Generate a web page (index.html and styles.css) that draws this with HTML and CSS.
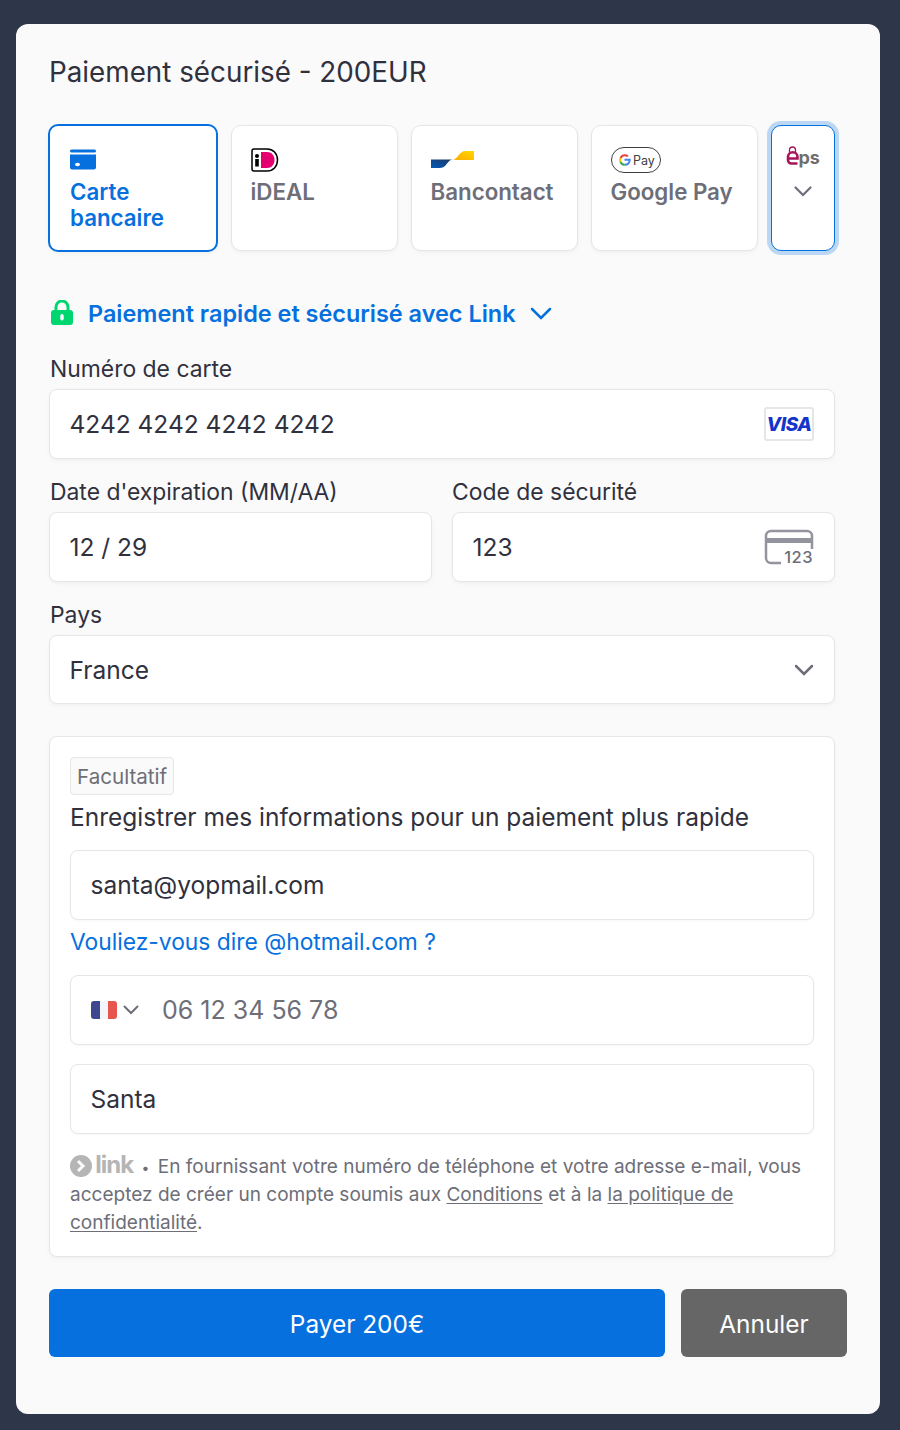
FILE: index.html
```html
<!DOCTYPE html>
<html lang="fr">
<head>
  <meta charset="UTF-8">
  <title>Paiement sécurisé</title>
  <link rel="stylesheet" href="styles.css">
</head>
<body>
  <div class="modal">
    <h1 class="title">Paiement sécurisé - 200EUR</h1>

    <div class="tabs">
      <div class="tab selected">
        <svg class="tab-icon" width="26" height="21" viewBox="0 0 26 21"><rect x="0" y="0" width="26" height="3" rx="1.5" fill="#0570de"/><path d="M0 5h26v13a2 2 0 0 1-2 2H2a2 2 0 0 1-2-2z" fill="#0570de"/><ellipse cx="7.500" cy="15" rx="2.500" ry="1.800" fill="#fff"/></svg>
        <span>Carte bancaire</span>
      </div>
      <div class="tab">
        <svg class="tab-icon" width="28" height="24" viewBox="0 0 28 24"><path d="M3 1h13c6 0 10.500 4.500 10.500 11S22 23 16 23H3a2 2 0 0 1-2-2V3a2 2 0 0 1 2-2z" fill="#fff" stroke="#000" stroke-width="1.500"/><path d="M10 4h6c4.500 0 7.500 3.500 7.500 8s-3 8-7.500 8h-6z" fill="#e5006f"/><circle cx="6" cy="8" r="2" fill="#000"/><rect x="4.200" y="11" width="3.600" height="7.500" fill="#000"/></svg>
        <span>iDEAL</span>
      </div>
      <div class="tab">
        <svg class="tab-icon" width="44" height="24" viewBox="0 0 44 24">
          <defs>
            <linearGradient id="bc-blue" x1="0" y1="1" x2="1" y2="0"><stop offset="0" stop-color="#005ab9"/><stop offset="1" stop-color="#1e3764"/></linearGradient>
            <linearGradient id="bc-yellow" x1="0" y1="1" x2="1" y2="0"><stop offset="0" stop-color="#fba900"/><stop offset="1" stop-color="#ffd800"/></linearGradient>
          </defs>
          <path d="M0 11.500h22c-3 0-4 2-6 4-2 3-4 4.500-8 4.500H0z" fill="url(#bc-blue)"/>
          <path d="M43 3v9H21c3 0 4-2 6-4 2-3 4-5 8-5z" fill="url(#bc-yellow)"/>
        </svg>
        <span>Bancontact</span>
      </div>
      <div class="tab">
        <svg class="tab-icon" width="50" height="26" viewBox="0 0 50 26">
          <rect x="0.500" y="0.500" width="49" height="25" rx="12.500" fill="#fff" stroke="#3c4043"/>
          <path d="M13.500 12.800h5.200c.1 3.200-2 5-4.900 5" fill="none" stroke="#4285f4" stroke-width="2"/>
          <path d="M13.800 17.800c-2 0-3.500-1.100-4.300-2.800" fill="none" stroke="#34a853" stroke-width="2"/>
          <path d="M9.500 15c-.5-1.200-.5-2.700 0-4" fill="none" stroke="#fbbc04" stroke-width="2"/>
          <path d="M9.500 11c.8-1.700 2.400-2.800 4.300-2.800 1.300 0 2.300.4 3.100 1.200" fill="none" stroke="#ea4335" stroke-width="2"/>
          <text x="22" y="17.500" class="gpay-text">Pay</text>
        </svg>
        <span>Google Pay</span>
      </div>
      <div class="tab more">
        <svg class="eps-icon" width="34" height="24" viewBox="0 0 34 24">
          <path d="M3.500 6.500V4a3 3 0 0 1 6 0v2.500" fill="none" stroke="#a6145a" stroke-width="1.300"/>
          <path d="M2 12.500h9.500V11a4.750 4.750 0 0 0-9.500 0v3a3.500 3.500 0 0 0 3.500 3.500h6" fill="none" stroke="#a6145a" stroke-width="2.600"/>
          <text x="12.500" y="17.500" class="eps-text">ps</text>
        </svg>
        <svg class="chevron" width="18" height="11" viewBox="0 0 18 11"><path d="M1.500 1.500 9 9l7.500-7.500" fill="none" stroke="#6d6e78" stroke-width="2.200" stroke-linecap="round"/></svg>
      </div>
    </div>

    <div class="link-row">
      <svg width="24" height="26" viewBox="0 0 24 26"><path d="M6 11V7a6 6 0 0 1 12 0v4" fill="none" stroke="#00d66f" stroke-width="3"/><rect x="1" y="10" width="22" height="15" rx="3" fill="#00d66f"/><rect x="10.300" y="14" width="3.400" height="6.500" rx="1.700" fill="#fff"/></svg>
      <span>Paiement rapide et sécurisé avec Link</span>
      <svg width="22" height="13" viewBox="0 0 22 13"><path d="M2 2l9 9 9-9" fill="none" stroke="#0570de" stroke-width="2.500" stroke-linecap="round"/></svg>
    </div>

    <label class="field-label">Numéro de carte</label>
    <div class="input">
      <span>4242 4242 4242 4242</span>
      <span class="visa"><span>VISA</span></span>
    </div>

    <div class="two-cols">
      <div>
        <label class="field-label">Date d'expiration (MM/AA)</label>
        <div class="input"><span>12 / 29</span></div>
      </div>
      <div>
        <label class="field-label">Code de sécurité</label>
        <div class="input">
          <span>123</span>
          <span class="cvc">
            <svg width="50" height="36" viewBox="0 0 50 36"><path d="M20 34H7a5 5 0 0 1-5-5V7a5 5 0 0 1 5-5h36a5 5 0 0 1 5 5v13" fill="none" stroke="#94949e" stroke-width="2.500"/><rect x="2" y="9" width="46" height="5" fill="#94949e"/></svg>
            <span class="cvc-num">123</span>
          </span>
        </div>
      </div>
    </div>

    <label class="field-label">Pays</label>
    <div class="input select">
      <span>France</span>
      <svg width="20" height="12" viewBox="0 0 20 12"><path d="M2 2l8 8 8-8" fill="none" stroke="#6d6e78" stroke-width="2.500" stroke-linecap="round"/></svg>
    </div>

    <div class="save-box">
      <span class="chip">Facultatif</span>
      <p class="save-title">Enregistrer mes informations pour un paiement plus rapide</p>
      <div class="input"><span>santa@yopmail.com</span></div>
      <a class="suggest">Vouliez-vous dire @hotmail.com ?</a>
      <div class="input phone">
        <span class="flag"><i class="fl-blue"></i><i class="fl-white"></i><i class="fl-red"></i></span>
        <svg class="phone-chevron" width="16" height="10" viewBox="0 0 16 10"><path d="M1.500 1.500 8 8l6.500-6.500" fill="none" stroke="#6d6e78" stroke-width="2" stroke-linecap="round"/></svg>
        <span class="phone-num">06 12 34 56 78</span>
      </div>
      <div class="input name"><span>Santa</span></div>
      <p class="legal">
        <svg class="link-badge" width="22" height="22" viewBox="0 0 22 22"><circle cx="11" cy="11" r="11" fill="#b5b5b5"/><path d="M8 6l5 5-5 5" fill="none" stroke="#fafafa" stroke-width="3"/></svg>
        <span class="link-word">link</span>
        <span class="dot">•</span> En fournissant votre numéro de téléphone et votre adresse e-mail, vous acceptez de créer un compte soumis aux <u>Conditions</u> et à la <u>la politique de confidentialité</u>.
      </p>
    </div>

    <div class="actions">
      <button class="btn pay">Payer 200€</button>
      <button class="btn cancel">Annuler</button>
    </div>
  </div>
</body>
</html>
```

FILE: styles.css
```css
* {
  box-sizing: border-box;
}

body {
  margin: 0;
  background: #2e3749;
  font-family: Inter, "Liberation Sans", sans-serif;
  color: #30313d;
}

.modal {
  width: 864px;
  height: 1390px;
  margin: 24px 0 0 16px;
  padding: 24px 45px 0 33px;
  background: #fafafa;
  border-radius: 12px;
}

.title {
  margin: 0;
  font-size: 27.800px;
  font-weight: 400;
  line-height: 48px;
}

.tabs {
  display: flex;
  gap: 12.500px;
  margin-top: 29px;
}

.tab {
  width: 167.500px;
  height: 126px;
  padding: 21px 20px 0 19px;
  background: #fff;
  border: 1px solid #e6e6e6;
  border-radius: 10px;
  box-shadow: 0 1px 3px rgba(0, 0, 0, .03), 0 3px 6px rgba(18, 42, 66, .02);
  color: #6d6e78;
  font-size: 22.300px;
  font-weight: 600;
  line-height: 26px;
}

.tab-icon {
  display: block;
  height: 26px;
  margin-bottom: 6px;
}

.tab.selected {
  border: 2px solid #0570de;
  color: #0570de;
  margin: -1px 0 -1px -1px;
  width: 170px;
  height: 128px;
  padding-left: 20px;
}

.tab.more {
  width: 64.500px;
  padding: 20px 0 0;
  border-color: #0570de;
  box-shadow: 0 0 0 4px rgba(5, 112, 222, .25);
  display: flex;
  flex-direction: column;
  align-items: center;
}

.eps-text {
  font: 700 18px Inter, sans-serif;
  fill: #6f6f6f;
}

.gpay-text {
  font: 400 12.500px Inter, sans-serif;
  fill: #3c4043;
}

.chevron {
  margin-top: 16px;
}

.link-row {
  display: flex;
  align-items: center;
  gap: 14px;
  margin: 46px 0 0 1px;
  height: 32px;
  color: #0570de;
  font-size: 23.450px;
  font-weight: 600;
}

.field-label {
  display: block;
  height: 28px;
  margin-left: 1px;
  font-size: 22.900px;
  line-height: 28px;
}

.link-row + .field-label {
  margin-top: 26px;
}

.input {
  display: flex;
  align-items: center;
  justify-content: space-between;
  height: 70px;
  margin-top: 6px;
  padding: 0 20px 0 19.500px;
  background: #fff;
  border: 1px solid #e6e6e6;
  border-radius: 8px;
  box-shadow: 0 1px 3px rgba(0, 0, 0, .03), 0 3px 6px rgba(18, 42, 66, .02);
  font-size: 24.500px;
}

.input.select {
  height: 69px;
}

.two-cols + .field-label {
  margin-top: 19px;
}

.input + .two-cols {
  margin-top: 19px;
}

.two-cols {
  display: grid;
  grid-template-columns: 383px 383px;
  gap: 20px;
}

.two-cols > div:last-child .field-label {
  margin-left: 0;
}

.visa {
  display: flex;
  align-items: center;
  justify-content: center;
  width: 50px;
  height: 34px;
  border: 2px solid #e6e6e6;
  border-radius: 3px;
  color: #1434cb;
  font-size: 19px;
  font-weight: 800;
  font-style: italic;
  letter-spacing: -.5px;
}

.cvc {
  position: relative;
  display: block;
  width: 50px;
  height: 36px;
}

.cvc-num {
  position: absolute;
  right: 1px;
  bottom: -1px;
  padding-left: 3px;
  background: #fff;
  color: #6d6e78;
  font-size: 16.500px;
  font-weight: 500;
  letter-spacing: .5px;
  line-height: 17px;
}

.save-box {
  height: 521px;
  margin-top: 32px;
  padding: 20px;
  background: #fff;
  border: 1px solid #e6e6e6;
  border-radius: 8px;
  box-shadow: 0 1px 3px rgba(0, 0, 0, .03), 0 3px 6px rgba(18, 42, 66, .02);
}

.chip {
  display: inline-block;
  height: 38px;
  padding: 0 6px;
  background: #fafafa;
  border: 1px solid #e6e6e6;
  border-radius: 4px;
  color: #6d6e78;
  font-size: 20.600px;
  line-height: 38px;
}

.save-title {
  margin: 4px 0 0;
  font-size: 24.500px;
  line-height: 36px;
}

.save-box .input {
  margin-top: 15px;
  box-shadow: 0 1px 3px rgba(0, 0, 0, .03);
}

.suggest {
  display: block;
  margin-top: 6px;
  height: 32px;
  color: #0570de;
  font-size: 22.800px;
  line-height: 32px;
}

.save-box .suggest + .input {
  margin-top: 17px;
}

.save-box .input.name {
  margin-top: 19px;
}

.input.phone {
  justify-content: flex-start;
  padding-left: 20px;
}

.flag {
  display: flex;
  width: 26px;
  height: 18px;
  overflow: hidden;
  border-radius: 3px;
}

.flag i {
  flex: 1;
}

.fl-blue {
  background: #3f4690;
}

.fl-white {
  background: #f3f5fb;
}

.fl-red {
  background: #e6564c;
}

.phone-chevron {
  margin: 0 23px 0 6px;
}

.phone-num {
  color: #6d6e78;
  font-size: 25px;
}

.legal {
  margin: 19px 0 0;
  color: #6d6e78;
  font-size: 19.050px;
  line-height: 28px;
}

.legal u {
  text-underline-offset: 2px;
}

.link-badge {
  vertical-align: -4px;
}

.link-word {
  margin-left: -2px;
  color: #b5b5b5;
  font-size: 24px;
  font-weight: 700;
  letter-spacing: -1px;
  line-height: 1;
}

.dot {
  margin: 0 3px 0 3px;
  font-size: 14px;
  line-height: 1;
}

.actions {
  display: flex;
  gap: 16px;
  width: 798px;
  margin: 32px 0 0;
}

.btn {
  height: 68px;
  padding-top: 2px;
  border: 0;
  border-radius: 6px;
  color: #fff;
  font-family: inherit;
  font-size: 24.400px;
}

.pay {
  flex: 1;
  background: #0570de;
}

.cancel {
  width: 166px;
  background: #666;
}
```
